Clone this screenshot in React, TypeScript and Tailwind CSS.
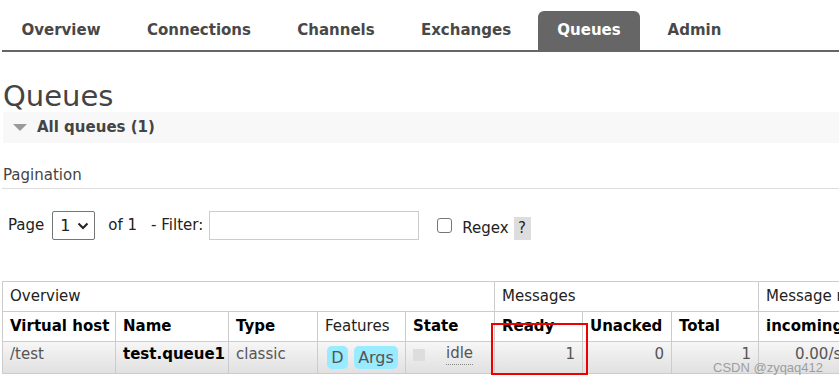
import React from "react";

const tabs: { name: string; w: string }[] = [
  { name: "Overview", w: "w-[118px]" },
  { name: "Connections", w: "w-[142px]" },
  { name: "Channels", w: "w-[116px]" },
  { name: "Exchanges", w: "w-[128px]" },
  { name: "Queues", w: "w-[102px]" },
  { name: "Admin", w: "w-[93px]" },
];

function Th({ children, bold = true, colSpan }: { children?: React.ReactNode; bold?: boolean; colSpan?: number }) {
  return (
    <th
      colSpan={colSpan}
      className={`border border-[#cccccc] px-[7px] h-[30px] text-left align-middle whitespace-nowrap overflow-hidden ${bold ? "font-bold text-black" : "font-normal text-[#222]"}`}
    >
      {children}
    </th>
  );
}

const td = "border border-[#cccccc] align-top pt-[1px] leading-[22px]";

export default function App() {
  return (
    <div className="relative w-[839px] h-[384px] overflow-hidden bg-white text-[#444] text-[15px]" style={{ fontFamily: '"DejaVu Sans", Verdana, sans-serif' }}>
      {/* Nav */}
      <div className="flex items-end gap-2 pt-[11px] border-b-2 border-[#666] ml-[2px]">
        {tabs.map((t) => (
          <div
            key={t.name}
            className={`${t.w} h-[39px] flex items-center justify-center text-[15px] font-bold rounded-t-[6px] ${t.name === "Queues" ? "bg-[#666] text-white" : "text-[#484848]"}`}
          >
            {t.name}
          </div>
        ))}
      </div>

      {/* Heading */}
      <h1 className="pl-[3px] mt-[27px] text-[29px] leading-[34px] font-normal text-[#444]">Queues</h1>

      {/* Section header */}
      <div className="ml-[3px] mt-[-1px] h-[31px] bg-[#f8f8f8] flex items-center">
        <svg width="14" height="8" viewBox="0 0 14 8" className="ml-[10px] mr-[10px]">
          <polygon points="0,0 14,0 7,7" fill="#9a9a9a" />
        </svg>
        <span className="font-bold text-[#444]">All queues (1)</span>
      </div>

      {/* Pagination */}
      <div className="ml-[2px] mt-[22px] pl-[1px] pb-[3px] border-b border-[#ddd] text-[#444] leading-[20px]">Pagination</div>

      <div className="flex items-center mt-[22px] pl-[8px] text-[#222]">
        <span>Page</span>
        <div className="ml-[8px] w-[43px] h-[29px] border border-[#767676] rounded-[2px] flex items-center justify-between pl-[7px] pr-[5px] text-[16px]">
          <span>1</span>
          <svg width="12" height="8" viewBox="0 0 12 8">
            <polyline points="1.5,1.5 6,6 10.5,1.5" fill="none" stroke="#222" strokeWidth="2" />
          </svg>
        </div>
        <span className="ml-[13px]">of 1</span>
        <span className="ml-[14px]">- Filter:</span>
        <div className="ml-[6px] w-[210px] h-[29px] border border-[#cccccc]" />
        <div className="ml-[18px] w-[15px] h-[15px] border border-[#767676] rounded-[3px]" />
        <span className="ml-[10px] mt-[6px]">Regex</span>
        <span className="ml-[5px] mt-[5px] w-[17px] h-[23px] bg-[#dddddd] flex items-center justify-center">?</span>
      </div>

      {/* Table */}
      <table className="mt-[41px] ml-[2px] border-collapse table-fixed w-[950px]">
        <colgroup>
          <col className="w-[113px]" />
          <col className="w-[113px]" />
          <col className="w-[89px]" />
          <col className="w-[88px]" />
          <col className="w-[89px]" />
          <col className="w-[88px]" />
          <col className="w-[89px]" />
          <col className="w-[87px]" />
          <col className="w-[194px]" />
        </colgroup>
        <thead>
          <tr>
            <Th bold={false} colSpan={5}>Overview</Th>
            <Th bold={false} colSpan={3}>Messages</Th>
            <Th bold={false}>Message rates</Th>
          </tr>
          <tr>
            <Th>Virtual host</Th>
            <Th>Name</Th>
            <Th>Type</Th>
            <Th bold={false}>Features</Th>
            <Th>State</Th>
            <Th>Ready</Th>
            <Th>Unacked</Th>
            <Th>Total</Th>
            <Th>incoming</Th>
          </tr>
        </thead>
        <tbody>
          <tr className="h-[32px] bg-gradient-to-b from-[#f6f6f6] to-[#e0e0e0] text-[#555]">
            <td className={`${td} px-[7px]`}>/test</td>
            <td className={`${td} px-[7px] font-bold text-black whitespace-nowrap`}>test.queue1</td>
            <td className={`${td} px-[7px]`}>classic</td>
            <td className="border border-[#cccccc] pl-[9px] align-middle">
              <div className="flex gap-[6px] text-[16px]">
                <span className="h-[23px] w-[21px] rounded-[5px] bg-[#99ebff] flex items-center justify-center">D</span>
                <span className="h-[23px] w-[44px] rounded-[5px] bg-[#99ebff] flex items-center justify-center">Args</span>
              </div>
            </td>
            <td className={`${td} pl-[7px]`}>
              <div className="flex items-start">
                <span className="mt-[6px] w-[12px] h-[12px] bg-[#dddddd]" />
                <span className="ml-[21px] border-b border-dotted border-[#888] leading-[21px]">idle</span>
              </div>
            </td>
            <td className={`${td} px-[7px] text-right`}>1</td>
            <td className={`${td} px-[7px] text-right`}>0</td>
            <td className={`${td} px-[7px] text-right`}>1</td>
            <td className={`${td} pl-[36px] whitespace-nowrap`}>0.00/s</td>
          </tr>
        </tbody>
      </table>

      {/* Red highlight box */}
      <div className="absolute left-[491px] top-[323px] w-[97px] h-[52px] border-2 border-[#ee0000]" />

      {/* Watermark */}
      <div className="absolute left-[713px] top-[358px] text-[13px] text-[#8a8a8a]/80 whitespace-nowrap" style={{ fontFamily: '"Liberation Sans", Arial, sans-serif' }}>
        CSDN @zyqaq412
      </div>
    </div>
  );
}
